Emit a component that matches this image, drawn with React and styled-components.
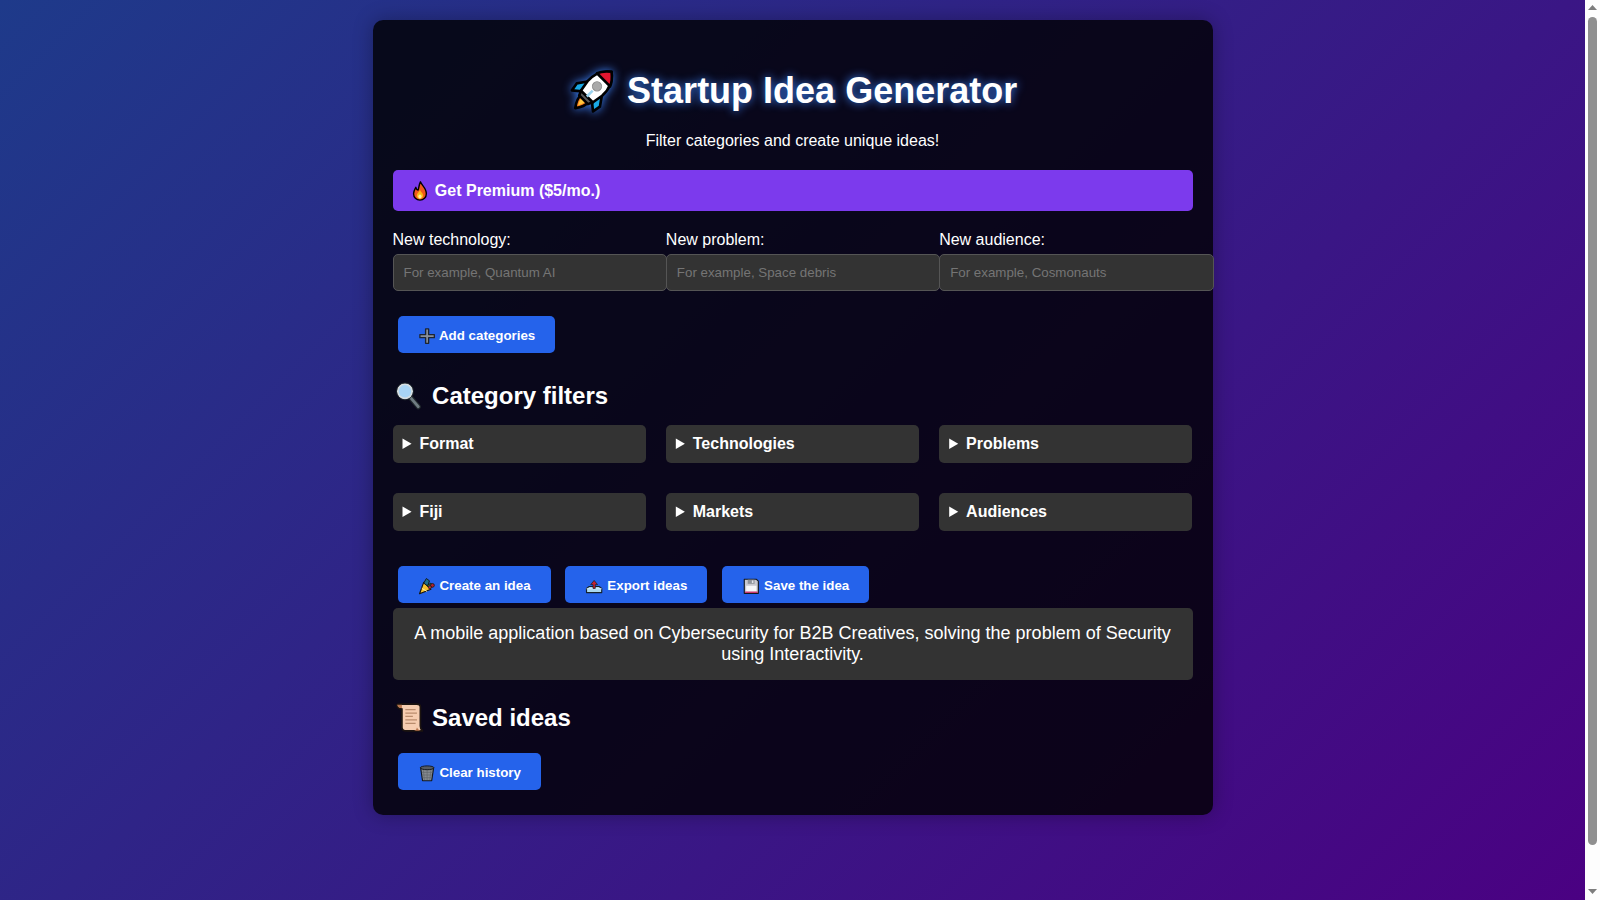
import React from 'react';
import styled, { createGlobalStyle } from 'styled-components';

const GlobalStyle = createGlobalStyle`
  body {
    margin: 0;
    color: #fff;
    font-family: "Liberation Sans", Arial, sans-serif;
  }
`;

const EmojiBox = styled.svg`
  display: inline-block;
  width: 1.37em;
  height: 1.37em;
  margin: -0.3em 0;
  vertical-align: baseline;
  overflow: visible;
  ${p => p.$glow && 'filter: drop-shadow(0 0 5px #3b82f6);'}
`;

const Viewport = styled.div`
  display: flex;
  height: 100vh;
  overflow: hidden;
`;

const Page = styled.main`
  flex: 1;
  align-self: flex-start;
  height: 941px;
  box-sizing: border-box;
  padding-top: 20px;
  background: linear-gradient(135deg, #1e3a8a, #4b0082);
`;

const ScrollTrack = styled.div`
  display: flex;
  flex-direction: column;
  align-items: center;
  width: 15px;
  background: #fdfdfd;
`;

const ScrollThumb = styled.div`
  width: 9px;
  height: 828px;
  background: #8f8f8f;
  border-radius: 5px;
`;

const ScrollArrow = styled.svg`
  width: 15px;
  height: 17px;
  flex: none;
  fill: #7d7d7d;
  ${p => p.$end && 'margin-top: auto;'}
`;

const Card = styled.div`
  display: flex;
  flex-direction: column;
  width: 800px;
  margin: 0 auto;
  padding: 20px;
  background: rgba(0, 0, 0, 0.8);
  border-radius: 10px;
  box-shadow: 0 0 20px rgba(0, 0, 0, 0.3);
`;

const Title = styled.h1`
  margin: 24px 0 14px;
  font-size: 36px;
  line-height: 54px;
  font-weight: 700;
  text-align: center;
  text-shadow: 0 0 10px #3b82f6;

  ${EmojiBox} { vertical-align: -1px; }
`;

const Subtitle = styled.p`
  margin: 0 0 20px;
  font-size: 16px;
  line-height: 18px;
  text-align: center;
`;

const PremiumLink = styled.a`
  display: block;
  height: 41px;
  box-sizing: border-box;
  padding: 1px 15px 0 16px;
  background: #7c3aed;
  border-radius: 5px;
  font-size: 16px;
  font-weight: 700;
  line-height: 40px;
  color: #fff;
  text-decoration: none;

  ${EmojiBox} { vertical-align: -1px; }
`;

const InputGrid = styled.div`
  display: grid;
  grid-template-columns: repeat(3, 1fr);
  width: calc(100% + 20px);
  margin-top: 20px;
`;

const Field = styled.label`
  display: block;
  font-size: 16px;
  line-height: 18px;
`;

const TextInput = styled.input`
  display: block;
  width: calc(100% + 1px);
  height: 37px;
  box-sizing: border-box;
  margin-top: 5px;
  padding: 10px;
  background: #333;
  border: 1px solid #555;
  border-radius: 5px;
  font-family: inherit;
  font-size: 13.33px;
  color: #fff;

  &::placeholder { color: #757575; }
`;

const ButtonRow = styled.div`
  display: flex;
  gap: 14.8px;
  margin: ${p => p.$top}px 5px 5px;
`;

const Button = styled.button`
  height: 37px;
  padding: 1px 20px 0;
  background: #2563eb;
  border: none;
  border-radius: 5px;
  font-family: inherit;
  font-size: 13.33px;
  font-weight: 700;
  color: #fff;
  white-space: pre;

  ${EmojiBox} { vertical-align: -1.5px; }
`;

const SectionTitle = styled.h2`
  margin: 21px 0 13px;
  font-size: 24px;
  line-height: 33px;
  font-weight: 700;
`;

const FilterGrid = styled.div`
  display: grid;
  grid-template-columns: repeat(3, 1fr);
  gap: 30px 20px;
`;

const Filter = styled.details`
  background: #333;
  border-radius: 5px;
`;

const FilterName = styled.summary`
  padding: 10px;
  font-size: 16px;
  line-height: 18px;
  font-weight: 700;
`;

const Result = styled.div`
  padding: 15px;
  background: #333;
  border-radius: 5px;
  font-size: 18px;
  line-height: 21px;
  text-align: center;
`;

const Emoji = ({ children, glow }) => (
  <EmojiBox viewBox="0 0 48 48" $glow={glow} aria-hidden="true">{children}</EmojiBox>
);

const Rocket = () => (
  <Emoji glow>
    <g transform="translate(24 25) rotate(45)" stroke="#000" strokeWidth="2.600" strokeLinejoin="round">
      <path d="M-5 11H5C5.500 16 3 20 0 24C-3 20-5.500 16-5 11Z" fill="#f57c1f" />
      <path d="M-2.500 12H2.500C2.500 16 1 18 0 20C-1 18-2.500 16-2.500 12Z" fill="#ffc83d" stroke="none" />
      <path d="M-9-4L-16 6L-14.500 14L-7 8Z" fill="#19a9e5" />
      <path d="M9-4L16 6L14.500 14L7 8Z" fill="#19a9e5" />
      <path d="M0-26C8-20 10.500-11 10-3L8 9H-8L-10-3C-10.500-11-8-20 0-26Z" fill="#fff" />
      <path d="M0-26C4.500-22.500 7.500-19 9-15H-9C-7.500-19-4.500-22.500 0-26Z" fill="#e3162f" />
      <path d="M-8 8H8L6 12.500H-6Z" fill="#5a5a5a" />
      <circle cx="0" cy="-6" r="4.500" fill="#a9a9a9" stroke="#8c8c8c" strokeWidth="1" />
      <path d="M0 0V8" stroke="#9bd3ee" strokeWidth="2.500" />
    </g>
  </Emoji>
);

const Fire = () => (
  <Emoji>
    <path d="M25 4C28 12 38 18 38 30C38 38 32 44 24 44C16 44 10 38 10 30C10 24 13 20 15 16C16 20 18 22 20 22C22 16 22 10 25 4Z" fill="#f2591c" stroke="#000" strokeWidth="3" strokeLinejoin="round" />
    <path d="M24 22C26 27 31 29 31 34C31 38 28 41 24 41C20 41 17 38 17 34C17 29 22 27 24 22Z" fill="#fdb813" />
    <ellipse cx="24" cy="36" rx="3.500" ry="4.500" fill="#fff2a0" />
  </Emoji>
);

const Plus = () => (
  <Emoji>
    <path d="M20 5H28V20H43V28H28V43H20V28H5V20H20Z" fill="#8a8f98" stroke="#1d2533" strokeWidth="3.500" strokeLinejoin="round" />
  </Emoji>
);

const Magnifier = () => (
  <Emoji>
    <path d="M25 28L37 42" stroke="#20282c" strokeWidth="7.500" strokeLinecap="round" />
    <path d="M25 28L37 42" stroke="#6f7c82" strokeWidth="4" strokeLinecap="round" />
    <circle cx="17.500" cy="19.500" r="10.500" fill="#a8d4f5" stroke="#d5dde1" strokeWidth="2.800" />
    <circle cx="17.500" cy="19.500" r="12.400" fill="none" stroke="#20282c" strokeWidth="1.200" />
  </Emoji>
);

const Popper = () => (
  <Emoji>
    <path d="M4 44L15 14L34 32Z" fill="#f9c22e" stroke="#151515" strokeWidth="3" strokeLinejoin="round" />
    <path d="M10 30L24 38" stroke="#fff0a8" strokeWidth="2.500" />
    <path d="M15 16L22 4L30 10L26 24Z" fill="#1f6f8b" stroke="#151515" strokeWidth="2.500" strokeLinejoin="round" />
    <path d="M24 22L34 16L38 26L30 30Z" fill="#2f6b3a" stroke="#151515" strokeWidth="2" />
    <circle cx="38" cy="22" r="5" fill="#b3202c" stroke="#151515" strokeWidth="2" />
    <circle cx="31" cy="27" r="4" fill="#c2303a" stroke="#151515" strokeWidth="1.500" />
  </Emoji>
);

const Outbox = () => (
  <Emoji>
    <path d="M4 30L11 25H37L44 30V41H4Z" fill="#a9d8f0" stroke="#16222c" strokeWidth="3" strokeLinejoin="round" />
    <path d="M4 31H44" stroke="#e6f5fc" strokeWidth="2" />
    <path d="M21 30V20H15L24 9L33 20H27V30Z" fill="#c8202f" stroke="#16222c" strokeWidth="2" strokeLinejoin="round" />
  </Emoji>
);

const Floppy = () => (
  <Emoji>
    <path d="M6 6H38L43 11V43H6Z" fill="#c9c9d0" stroke="#15181f" strokeWidth="3" strokeLinejoin="round" />
    <path d="M15 7H33V18H15Z" fill="#8f939b" />
    <path d="M26 9H30V16H26Z" fill="#e4e4e8" />
    <path d="M11 23H38V38H11Z" fill="#f7f7f9" />
    <path d="M8 38.500H41V41.500H8Z" fill="#d81b60" />
  </Emoji>
);

const ScrollPaper = () => (
  <Emoji>
    <path d="M6 7C6 11 9 13 13 13V40C13 44 16 45 20 45H43C41 43 40 41 40 38V10C40 7 38 6 35 6H8Z" fill="#f6cdb0" stroke="#1c1410" strokeWidth="2.500" strokeLinejoin="round" />
    <path d="M6 7C7 11 10 12 13 12V7Z" fill="#b9764e" />
    <path d="M35 40C37 44 40 45 43 45H28C32 45 34 44 35 40Z" fill="#b9764e" />
    <path d="M18 14H33M18 19H35M18 24H29M18 29H35M18 34H33" stroke="#b98c6c" strokeWidth="1.800" />
  </Emoji>
);

const Trash = () => (
  <Emoji>
    <path d="M7 11H41L36 44H12Z" fill="#858a8f" stroke="#14181e" strokeWidth="3" strokeLinejoin="round" />
    <path d="M14 16L17 42M24 16V42M34 16L31 42M10 22H38M11 29H37M12 36H36" stroke="#62666b" strokeWidth="1.800" />
    <ellipse cx="24" cy="10" rx="18" ry="5" fill="#565b62" stroke="#14181e" strokeWidth="2.500" />
  </Emoji>
);

const inputs = [
  { label: 'New technology:', placeholder: 'For example, Quantum AI' },
  { label: 'New problem:', placeholder: 'For example, Space debris' },
  { label: 'New audience:', placeholder: 'For example, Cosmonauts' },
];

const filters = ['Format', 'Technologies', 'Problems', 'Fiji', 'Markets', 'Audiences'];

export default function App() {
  return (
    <Viewport>
      <GlobalStyle />
      <Page>
        <Card>
          <Title><Rocket /> Startup Idea Generator</Title>
          <Subtitle>Filter categories and create unique ideas!</Subtitle>
          <PremiumLink href="#"><Fire /> Get Premium ($5/mo.)</PremiumLink>

          <InputGrid>
            {inputs.map(i => (
              <Field key={i.label}>
                {i.label}
                <TextInput placeholder={i.placeholder} />
              </Field>
            ))}
          </InputGrid>

          <ButtonRow $top={25}>
            <Button><Plus /> Add categories</Button>
          </ButtonRow>

          <SectionTitle><Magnifier /> Category filters</SectionTitle>
          <FilterGrid>
            {filters.map(f => (
              <Filter key={f}>
                <FilterName>{f}</FilterName>
              </Filter>
            ))}
          </FilterGrid>

          <ButtonRow $top={35}>
            <Button><Popper /> Create an idea</Button>
            <Button><Outbox /> Export ideas</Button>
            <Button><Floppy /> Save the idea</Button>
          </ButtonRow>

          <Result>A mobile application based on Cybersecurity for B2B Creatives, solving the problem of Security using Interactivity.</Result>

          <SectionTitle><ScrollPaper /> Saved ideas</SectionTitle>
          <ButtonRow $top={6}>
            <Button><Trash /> Clear history</Button>
          </ButtonRow>
        </Card>
      </Page>
      <ScrollTrack>
        <ScrollArrow viewBox="0 0 15 17"><path d="M7.500 5L12 10H3Z" /></ScrollArrow>
        <ScrollThumb />
        <ScrollArrow viewBox="0 0 15 17" $end><path d="M7.500 11L12 6H3Z" /></ScrollArrow>
      </ScrollTrack>
    </Viewport>
  );
}
